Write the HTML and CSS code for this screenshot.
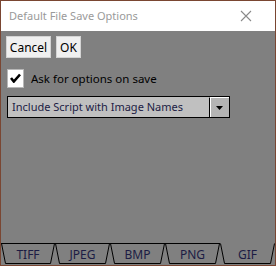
FILE: index.html
```html
<!DOCTYPE html>
<html lang="en">
<head>
  <meta charset="UTF-8">
  <title>Default File Save Options</title>
  <link rel="stylesheet" href="styles.css">
</head>
<body>
  <div class="window">
    <div class="titlebar">
      <span class="title">Default File Save Options</span>
      <svg class="close" width="12" height="12" viewBox="0 0 12 12">
        <path d="M1 1 L11 11 M11 1 L1 11" stroke="#8a8a8a" stroke-width="1.1" fill="none"/>
      </svg>
    </div>

    <div class="content">
      <div class="buttons">
        <button class="btn cancel">Cancel</button>
        <button class="btn ok">OK</button>
      </div>

      <label class="check-row">
        <span class="checkbox">
          <svg width="11" height="10" viewBox="0 0 11 10">
            <path d="M1 5 L3.8 8.5 L10 1.5" stroke="#000" stroke-width="2.6" fill="none"/>
          </svg>
        </span>
        <span class="check-label">Ask for options on save</span>
      </label>

      <div class="dropdown">
        <span class="dropdown-text">Include Script with Image Names</span>
        <span class="dropdown-btn">
          <svg width="7" height="4" viewBox="0 0 7 4"><path d="M0 0 L7 0 L3.5 4 Z" fill="#000"/></svg>
        </span>
      </div>

      <div class="tabs">
        <div class="tab first"><svg class="tab-shape" width="54" height="21" viewBox="0 0 54 21"><polyline points="0.5,0.5 4.5,20.5 49.5,20.5 53.5,0.5" fill="none" stroke="#000"/><line x1="0" y1="0.5" x2="54" y2="0.5" stroke="#000"/></svg><span>TIFF</span></div>
        <div class="tab"><svg class="tab-shape" width="55" height="21" viewBox="0 0 55 21"><polyline points="0.5,0.5 4.5,20.5 50.5,20.5 54.5,0.5" fill="none" stroke="#000"/><line x1="0" y1="0.5" x2="55" y2="0.5" stroke="#000"/></svg><span>JPEG</span></div>
        <div class="tab"><svg class="tab-shape" width="55" height="21" viewBox="0 0 55 21"><polyline points="0.5,0.5 4.5,20.5 50.5,20.5 54.5,0.5" fill="none" stroke="#000"/><line x1="0" y1="0.5" x2="55" y2="0.5" stroke="#000"/></svg><span>BMP</span></div>
        <div class="tab"><svg class="tab-shape" width="55" height="21" viewBox="0 0 55 21"><polyline points="0.5,0.5 4.5,20.5 50.5,20.5 54.5,0.5" fill="none" stroke="#000"/><line x1="0" y1="0.5" x2="55" y2="0.5" stroke="#000"/></svg><span>PNG</span></div>
        <div class="tab active"><svg class="tab-shape" width="55" height="21" viewBox="0 0 55 21"><polyline points="0.5,0.5 4.5,20.5 50.5,20.5 54.5,0.5" fill="none" stroke="#000"/></svg><span>GIF</span></div>
      </div>
    </div>
  </div>
</body>
</html>
```

FILE: styles.css
```css
body {
  margin: 0;
  font-family: 'Noto Sans', sans-serif;
  font-size: 12px;
}

.window {
  width: 276px;
  height: 266px;
  box-sizing: border-box;
  border: 1px solid #7a4632;
  display: flex;
  flex-direction: column;
}

.titlebar {
  height: 30px;
  background: #fff;
  display: flex;
  align-items: center;
  padding: 0 0 0 8px;
  flex-shrink: 0;
}

.title {
  color: #9a9a9a;
  font-size: 11px;
  flex: 1;
  margin-top: -1px;
}

.close {
  margin-right: 23px;
}

.content {
  flex: 1;
  background: #808080;
  display: flex;
  flex-direction: column;
  padding: 5px 0 1px 5px;
}

.buttons {
  display: flex;
  gap: 5px;
}

.btn {
  height: 22px;
  margin: 0;
  padding: 0;
  font-family: 'Noto Sans', sans-serif;
  font-size: 12px;
  color: #000;
  background: #f0f0f0;
  border: 1px solid #d4d4d4;
  border-radius: 0;
}

.cancel { width: 45px; }
.ok { width: 25px; }

.check-row {
  display: flex;
  align-items: center;
  margin-top: 10px;
  height: 20px;
}

.checkbox {
  width: 17px;
  height: 19px;
  box-sizing: border-box;
  margin-left: 1px;
  background: #fff;
  border: 1px solid #b8b8b8;
  display: flex;
  align-items: center;
  justify-content: center;
}

.check-label {
  margin-left: 7px;
  font-size: 11.5px;
  color: #000;
}

.dropdown {
  margin-top: 8px;
  margin-left: 1px;
  width: 223px;
  height: 22px;
  box-sizing: border-box;
  border: 1px solid #000;
  background: #c0c0c0;
  display: flex;
}

.dropdown-text {
  flex: 1;
  padding-left: 4px;
  font-size: 11px;
  line-height: 20px;
  color: #1c1c44;
}

.dropdown-btn {
  width: 20px;
  box-sizing: border-box;
  border-left: 1px solid #000;
  border-top: 1px solid #fff;
  box-shadow: inset 1px 0 0 #fff;
  background: #b4b4b4;
  display: flex;
  align-items: center;
  justify-content: center;
}

.tabs {
  margin-top: auto;
  margin-left: -5px;
  display: flex;
  height: 21px;
}

.tab {
  position: relative;
  width: 55px;
  height: 21px;
  display: flex;
  align-items: center;
  justify-content: center;
  color: #1c1c44;
}

.tab.first { width: 54px; }

.tab-shape {
  position: absolute;
  left: 0;
  top: 0;
}

.tab span {
  position: relative;
  margin-top: 1px;
}
```
